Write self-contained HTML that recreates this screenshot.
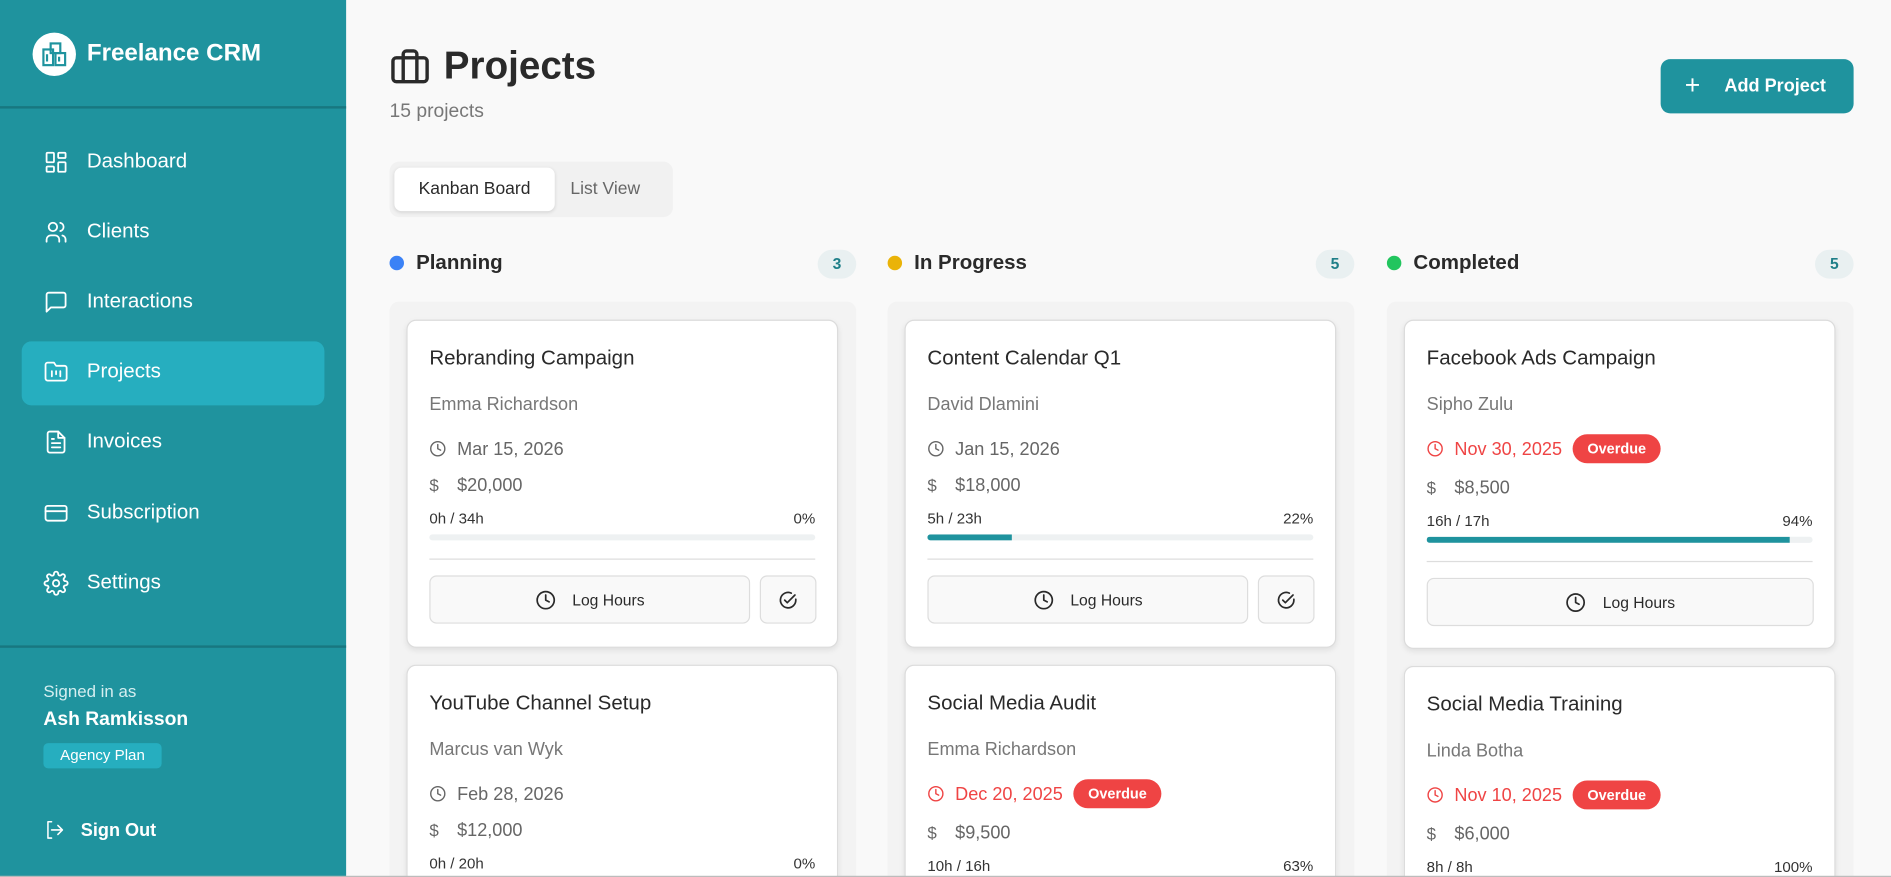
<!DOCTYPE html>
<html><head><meta charset="utf-8"><style>
*{box-sizing:border-box;margin:0;padding:0}
html,body{width:1891px;height:877px;overflow:hidden;background:#f9f9f9;font-family:"Liberation Sans",sans-serif}
#w{position:absolute;left:0;top:0;width:1568px;height:727px;overflow:hidden;transform:scale(1.20599,1.2063);transform-origin:0 0;background:#f9f9f9}
.a{position:absolute}
.sb{left:0;top:0;width:287px;height:727px;background:#1f939e;color:#fff}
.nav{left:36px;height:20px;display:flex;align-items:center;font-size:17px}
.nav svg{width:21px;height:21px;margin-right:15px;fill:none;stroke:#fff;stroke-width:1.7;stroke-linecap:round;stroke-linejoin:round}
.col{width:387px;top:250px;height:477px;background:#f3f3f3;border-radius:8px 8px 0 0}
.ch{font-size:17px;font-weight:bold;color:#2a2a2a;display:flex;align-items:center}
.dot{width:12px;height:12px;border-radius:50%;margin-right:10px}
.cnt{width:32px;height:24px;border-radius:12px;background:#e9f0f1;color:#1f7f88;font-size:13px;font-weight:bold;text-align:center;line-height:24px}
.card{width:358px;height:272px;background:#fff;border:1.5px solid #dcdcdc;border-radius:8px;box-shadow:0 2px 5px rgba(0,0,0,.08);overflow:hidden}
.card.bt{height:176px;border-bottom:none;border-radius:8px 8px 0 0}
.card .t{position:absolute;left:18px;top:21px;font-size:17px;color:#2a2a2a}
.card .n{position:absolute;left:18px;top:61px;font-size:15px;color:#777}
.card .d{position:absolute;left:18px;top:96px;font-size:15px;color:#666;display:flex;align-items:center;height:20px}
.card .d svg{width:14px;height:14px;margin-right:9px;fill:none;stroke:currentColor;stroke-width:2;stroke-linecap:round}
.card .m{position:absolute;left:18px;font-size:15px;color:#666}
.card .m span{display:inline-block;width:23px;font-size:14px}
.card .h{position:absolute;left:18px;right:18px;font-size:12.5px;color:#333;display:flex;justify-content:space-between}
.card .bar{position:absolute;left:18px;right:18px;height:5px;background:#eef1f2;border-radius:3px;overflow:hidden}
.card .bar i{display:block;height:100%;background:#1f939e}
.card .hr{position:absolute;left:18px;right:18px;height:1px;background:#ddd}
.btn{position:absolute;height:40px;border:1px solid #ddd;border-radius:6px;background:#f9f9f9;display:flex;align-items:center;justify-content:center;font-size:13px;color:#2a2a2a}
.btn svg{width:17px;height:17px;fill:none;stroke:#2a2a2a;stroke-width:2;stroke-linecap:round;stroke-linejoin:round}
.red{color:#ef4444!important}
.od{margin-left:9px;background:#ef4444;color:#fff;font-size:12px;font-weight:bold;padding:0 12px;height:24px;line-height:24px;border-radius:12px}
</style></head><body><div id="w">
<div class="a sb">
 <div class="a" style="left:27px;top:27px;width:36px;height:36px;border-radius:50%;background:#fff"></div>
 <svg class="a" style="left:33px;top:33px" width="24" height="24" viewBox="0 0 24 24" fill="none" stroke="#1f939e" stroke-width="1.8"><rect x="3" y="8" width="8" height="13"/><rect x="9" y="3" width="8" height="8"/><rect x="13" y="11" width="8" height="10"/><path d="M6 12v6M16 14v4"/></svg>
 <div class="a" style="left:72px;top:33px;font-size:20px;font-weight:bold">Freelance CRM</div>
 <div class="a" style="left:0;top:88px;width:287px;height:1.5px;background:#187780"></div>
 <div class="a" style="left:18px;top:283px;width:251px;height:53px;border-radius:8px;background:#26aebf"></div>
 <div class="a nav" style="top:124px"><svg viewBox="0 0 24 24"><rect x="3" y="3" width="7" height="9" rx="1"/><rect x="14" y="3" width="7" height="5" rx="1"/><rect x="14" y="12" width="7" height="9" rx="1"/><rect x="3" y="16" width="7" height="5" rx="1"/></svg>Dashboard</div>
 <div class="a nav" style="top:182px"><svg viewBox="0 0 24 24"><circle cx="9" cy="7" r="4"/><path d="M3 21v-2a4 4 0 0 1 4-4h4a4 4 0 0 1 4 4v2M16 3.1a4 4 0 0 1 0 7.8M21 21v-2a4 4 0 0 0-3-3.9"/></svg>Clients</div>
 <div class="a nav" style="top:240px"><svg viewBox="0 0 24 24"><path d="M21 15a2 2 0 0 1-2 2H7l-4 4V5a2 2 0 0 1 2-2h14a2 2 0 0 1 2 2z"/></svg>Interactions</div>
 <div class="a nav" style="top:298px"><svg viewBox="0 0 24 24"><path d="M4 20h16a2 2 0 0 0 2-2V8a2 2 0 0 0-2-2h-8L10 3H4a2 2 0 0 0-2 2v13a2 2 0 0 0 2 2zM8 11v5M12 11v3M16 11v5"/></svg>Projects</div>
 <div class="a nav" style="top:356px"><svg viewBox="0 0 24 24"><path d="M14 2H6a2 2 0 0 0-2 2v16a2 2 0 0 0 2 2h12a2 2 0 0 0 2-2V8z"/><path d="M14 2v6h6M16 13H8M16 17H8M10 9H8"/></svg>Invoices</div>
 <div class="a nav" style="top:415px"><svg viewBox="0 0 24 24"><rect x="2" y="5" width="20" height="14" rx="2"/><path d="M2 10h20"/></svg>Subscription</div>
 <div class="a nav" style="top:473px"><svg viewBox="0 0 24 24"><circle cx="12" cy="12" r="3"/><path d="M19.4 15a1.7 1.7 0 0 0 .3 1.8l.1.1a2 2 0 1 1-2.8 2.8l-.1-.1a1.7 1.7 0 0 0-1.8-.3 1.7 1.7 0 0 0-1 1.5V21a2 2 0 1 1-4 0v-.1a1.7 1.7 0 0 0-1.1-1.5 1.7 1.7 0 0 0-1.8.3l-.1.1a2 2 0 1 1-2.8-2.8l.1-.1a1.7 1.7 0 0 0 .3-1.8 1.7 1.7 0 0 0-1.5-1H3a2 2 0 1 1 0-4h.1a1.7 1.7 0 0 0 1.5-1.1 1.7 1.7 0 0 0-.3-1.8l-.1-.1a2 2 0 1 1 2.8-2.8l.1.1a1.7 1.7 0 0 0 1.8.3H9a1.7 1.7 0 0 0 1-1.5V3a2 2 0 1 1 4 0v.1a1.7 1.7 0 0 0 1 1.5 1.7 1.7 0 0 0 1.8-.3l.1-.1a2 2 0 1 1 2.8 2.8l-.1.1a1.7 1.7 0 0 0-.3 1.8V9a1.7 1.7 0 0 0 1.5 1H21a2 2 0 1 1 0 4h-.1a1.7 1.7 0 0 0-1.5 1z"/></svg>Settings</div>
 <div class="a" style="left:0;top:535px;width:287px;height:1.5px;background:#187780"></div>
 <div class="a" style="left:36px;top:565px;font-size:14px;color:#d5eef0">Signed in as</div>
 <div class="a" style="left:36px;top:588px;font-size:16px;font-weight:bold">Ash Ramkisson</div>
 <div class="a" style="left:36px;top:616px;width:98px;height:21px;border-radius:4px;background:#26aebf;font-size:12.5px;text-align:center;line-height:21px">Agency Plan</div>
 <div class="a nav" style="top:678px;font-size:15px;font-weight:bold"><svg viewBox="0 0 24 24" style="width:18px;height:18px;margin-right:13px"><path d="M9 21H5V3h4M16 17l5-5-5-5M21 12H9"/></svg>Sign Out</div>
</div>
<svg class="a" style="left:322px;top:38px" width="36" height="34" viewBox="0 0 24 24" fill="none" stroke="#2a2a2a" stroke-width="2" stroke-linejoin="round"><rect x="2" y="7" width="20" height="14" rx="2"/><path d="M16 21V5a2 2 0 0 0-2-2h-4a2 2 0 0 0-2 2v16M8 7v14M16 7v14"/></svg>
<div class="a" style="left:368px;top:36px;font-size:32px;font-weight:bold;color:#2a2a2a">Projects</div>
<div class="a" style="left:323px;top:84px;font-size:16px;color:#777">15 projects</div>
<div class="a" style="left:1377px;top:49px;width:160px;height:45px;border-radius:8px;background:#1f939e;color:#fff;font-size:15px;font-weight:bold;display:flex;align-items:center"><span style="font-size:22px;font-weight:normal;margin:0 20px 2px 20px">+</span>Add Project</div>
<div class="a" style="left:323px;top:134px;width:235px;height:46px;border-radius:8px;background:#f1f1f1"></div>
<div class="a" style="left:327px;top:139px;width:133px;height:36px;border-radius:6px;background:#fff;box-shadow:0 1px 3px rgba(0,0,0,.12);font-size:14.5px;color:#2a2a2a;text-align:center;line-height:36px">Kanban Board</div>
<div class="a" style="left:473px;top:139px;font-size:14.5px;color:#666;line-height:36px">List View</div>

<div class="a ch" style="left:323px;top:208px"><div class="dot" style="background:#3b82f6"></div>Planning</div>
<div class="a cnt" style="left:678px;top:207px">3</div>
<div class="a ch" style="left:736px;top:208px"><div class="dot" style="background:#eab308"></div>In Progress</div>
<div class="a cnt" style="left:1091px;top:207px">5</div>
<div class="a ch" style="left:1150px;top:208px"><div class="dot" style="background:#22c55e"></div>Completed</div>
<div class="a cnt" style="left:1505px;top:207px">5</div>
<div class="a col" style="left:323px"></div><div class="a col" style="left:736px"></div><div class="a col" style="left:1150px"></div>

<div class="a card" style="left:337px;top:265px">
<div class="t">Rebranding Campaign</div><div class="n">Emma Richardson</div>
<div class="d"><svg viewBox="0 0 24 24"><circle cx="12" cy="12" r="10"/><path d="M12 6v6l4 2"/></svg>Mar 15, 2026</div>
<div class="m" style="top:128px"><span>$</span>$20,000</div>
<div class="h" style="top:157px"><span>0h / 34h</span><span>0%</span></div>
<div class="bar" style="top:177px"><i style="width:0"></i></div><div class="hr" style="top:197px"></div>
<div class="btn" style="left:18px;top:211px;width:266px"><svg viewBox="0 0 24 24" style="margin-right:14px"><circle cx="12" cy="12" r="10"/><path d="M12 6v6l4 2"/></svg>Log Hours</div>
<div class="btn" style="left:292px;top:211px;width:47px"><svg viewBox="0 0 24 24"><path d="M21 11v1a9 9 0 1 1-5.3-8.2"/><path d="M8 12l3 3 9-9"/></svg></div>
</div>
<div class="a card bt" style="left:337px;top:551px">
<div class="t">YouTube Channel Setup</div><div class="n">Marcus van Wyk</div>
<div class="d"><svg viewBox="0 0 24 24"><circle cx="12" cy="12" r="10"/><path d="M12 6v6l4 2"/></svg>Feb 28, 2026</div>
<div class="m" style="top:128px"><span>$</span>$12,000</div>
<div class="h" style="top:157px"><span>0h / 20h</span><span>0%</span></div>
</div>
<div class="a card" style="left:750px;top:265px">
<div class="t">Content Calendar Q1</div><div class="n">David Dlamini</div>
<div class="d"><svg viewBox="0 0 24 24"><circle cx="12" cy="12" r="10"/><path d="M12 6v6l4 2"/></svg>Jan 15, 2026</div>
<div class="m" style="top:128px"><span>$</span>$18,000</div>
<div class="h" style="top:157px"><span>5h / 23h</span><span>22%</span></div>
<div class="bar" style="top:177px"><i style="width:22%"></i></div><div class="hr" style="top:197px"></div>
<div class="btn" style="left:18px;top:211px;width:266px"><svg viewBox="0 0 24 24" style="margin-right:14px"><circle cx="12" cy="12" r="10"/><path d="M12 6v6l4 2"/></svg>Log Hours</div>
<div class="btn" style="left:292px;top:211px;width:47px"><svg viewBox="0 0 24 24"><path d="M21 11v1a9 9 0 1 1-5.3-8.2"/><path d="M8 12l3 3 9-9"/></svg></div>
</div>
<div class="a card bt" style="left:750px;top:551px">
<div class="t">Social Media Audit</div><div class="n">Emma Richardson</div>
<div class="d red"><svg viewBox="0 0 24 24"><circle cx="12" cy="12" r="10"/><path d="M12 6v6l4 2"/></svg>Dec 20, 2025<span class="od">Overdue</span></div>
<div class="m" style="top:130px"><span>$</span>$9,500</div>
<div class="h" style="top:159px"><span>10h / 16h</span><span>63%</span></div>
</div>
<div class="a card" style="left:1164px;top:265px;height:273px">
<div class="t">Facebook Ads Campaign</div><div class="n">Sipho Zulu</div>
<div class="d red"><svg viewBox="0 0 24 24"><circle cx="12" cy="12" r="10"/><path d="M12 6v6l4 2"/></svg>Nov 30, 2025<span class="od">Overdue</span></div>
<div class="m" style="top:130px"><span>$</span>$8,500</div>
<div class="h" style="top:159px"><span>16h / 17h</span><span>94%</span></div>
<div class="bar" style="top:179px"><i style="width:94%"></i></div><div class="hr" style="top:199px"></div>
<div class="btn" style="left:18px;top:213px;width:321px"><svg viewBox="0 0 24 24" style="margin-right:14px"><circle cx="12" cy="12" r="10"/><path d="M12 6v6l4 2"/></svg>Log Hours</div>
</div>
<div class="a card bt" style="left:1164px;top:552px;height:175px">
<div class="t">Social Media Training</div><div class="n">Linda Botha</div>
<div class="d red"><svg viewBox="0 0 24 24"><circle cx="12" cy="12" r="10"/><path d="M12 6v6l4 2"/></svg>Nov 10, 2025<span class="od">Overdue</span></div>
<div class="m" style="top:130px"><span>$</span>$6,000</div>
<div class="h" style="top:159px"><span>8h / 8h</span><span>100%</span></div>
</div>
<div class="a" style="left:0;top:726px;width:1568px;height:1px;background:#bbb"></div>
</div></body></html>
